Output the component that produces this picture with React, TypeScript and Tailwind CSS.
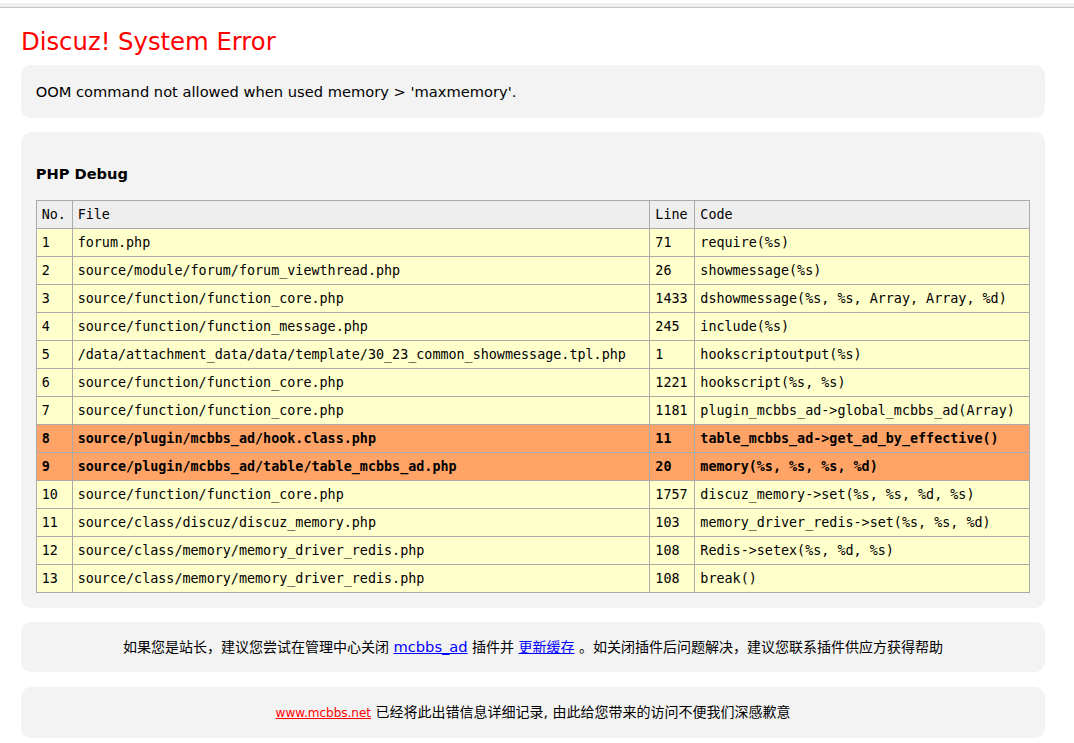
const rows = [
  { no: 1, file: 'forum.php', line: '71', code: 'require(%s)' },
  { no: 2, file: 'source/module/forum/forum_viewthread.php', line: '26', code: 'showmessage(%s)' },
  { no: 3, file: 'source/function/function_core.php', line: '1433', code: 'dshowmessage(%s, %s, Array, Array, %d)' },
  { no: 4, file: 'source/function/function_message.php', line: '245', code: 'include(%s)' },
  { no: 5, file: '/data/attachment_data/data/template/30_23_common_showmessage.tpl.php', line: '1', code: 'hookscriptoutput(%s)' },
  { no: 6, file: 'source/function/function_core.php', line: '1221', code: 'hookscript(%s, %s)' },
  { no: 7, file: 'source/function/function_core.php', line: '1181', code: 'plugin_mcbbs_ad->global_mcbbs_ad(Array)' },
  { no: 8, file: 'source/plugin/mcbbs_ad/hook.class.php', line: '11', code: 'table_mcbbs_ad->get_ad_by_effective()', hot: true },
  { no: 9, file: 'source/plugin/mcbbs_ad/table/table_mcbbs_ad.php', line: '20', code: 'memory(%s, %s, %s, %d)', hot: true },
  { no: 10, file: 'source/function/function_core.php', line: '1757', code: 'discuz_memory->set(%s, %s, %d, %s)' },
  { no: 11, file: 'source/class/discuz/discuz_memory.php', line: '103', code: 'memory_driver_redis->set(%s, %s, %d)' },
  { no: 12, file: 'source/class/memory/memory_driver_redis.php', line: '108', code: 'Redis->setex(%s, %d, %s)' },
  { no: 13, file: 'source/class/memory/memory_driver_redis.php', line: '108', code: 'break()' },
];

const cell = 'px-[5px] py-[3px] leading-[21px] text-left whitespace-nowrap';

const App = () => {
  return (
    <div className="min-h-screen bg-white text-black font-['DejaVu_Sans',Verdana,'Noto_Sans_CJK_SC',sans-serif]">
      <div className="mt-[3px] h-[5px] bg-[#f0f0f0] border-b border-[#c4c4c4]" />
      <div className="w-[1024px] ml-[21px]">
        <h1 className="mt-[19px] mb-[9px] text-[24.3px] leading-[29px] text-[#ff0000]">Discuz! System Error</h1>

        <div className="bg-[#f3f3f3] rounded-[10px] p-[14.67px] text-[14.67px] leading-[160%] mb-[14.67px]">
          OOM command not allowed when used memory &gt; 'maxmemory'.
        </div>

        <div className="bg-[#f3f3f3] rounded-[10px] p-[14.67px] text-[14.67px] leading-[160%] mb-[14.67px]">
          <p className="my-[14.67px] font-bold">PHP Debug</p>
          <table className="w-full table-fixed border-separate border-spacing-[1px] bg-[#aaaaaa] text-[13.4px] font-['DejaVu_Sans_Mono','Liberation_Mono',monospace]">
            <thead>
              <tr className="bg-[#eeeeee]">
                <th className={`${cell} font-normal w-[35px]`}>No.</th>
                <th className={`${cell} font-normal`}>File</th>
                <th className={`${cell} font-normal w-[44px]`}>Line</th>
                <th className={`${cell} font-normal w-[334px]`}>Code</th>
              </tr>
            </thead>
            <tbody>
              {rows.map((r) => (
                <tr key={r.no} className={r.hot ? 'bg-[#ffa366] font-bold' : 'bg-[#ffffcc]'}>
                  <td className={cell}>{r.no}</td>
                  <td className={cell}>{r.file}</td>
                  <td className={cell}>{r.line}</td>
                  <td className={cell}>{r.code}</td>
                </tr>
              ))}
            </tbody>
          </table>
        </div>

        <div className="bg-[#f3f3f3] rounded-[10px] p-[14px] text-[14px] leading-[22px] text-center mb-[15px] font-['DejaVu_Sans','Noto_Sans_CJK_SC',sans-serif]">
          如果您是站长，建议您尝试在管理中心关闭{' '}
          <a href="#" className="text-[#0000ff] underline text-[14.67px]">mcbbs_ad</a> 插件并{' '}
          <a href="#" className="text-[#0000ff] underline">更新缓存</a> 。如关闭插件后问题解决，建议您联系插件供应方获得帮助
        </div>

        <div className="bg-[#f3f3f3] rounded-[10px] p-[14px] text-[14px] leading-[22px] text-center font-['DejaVu_Sans','Noto_Sans_CJK_SC',sans-serif]">
          <a href="#" className="text-[#ff0000] underline text-[12px]">www.mcbbs.net</a> 已经将此出错信息详细记录, 由此给您带来的访问不便我们深感歉意
        </div>
      </div>
    </div>
  );
};

export default App;
